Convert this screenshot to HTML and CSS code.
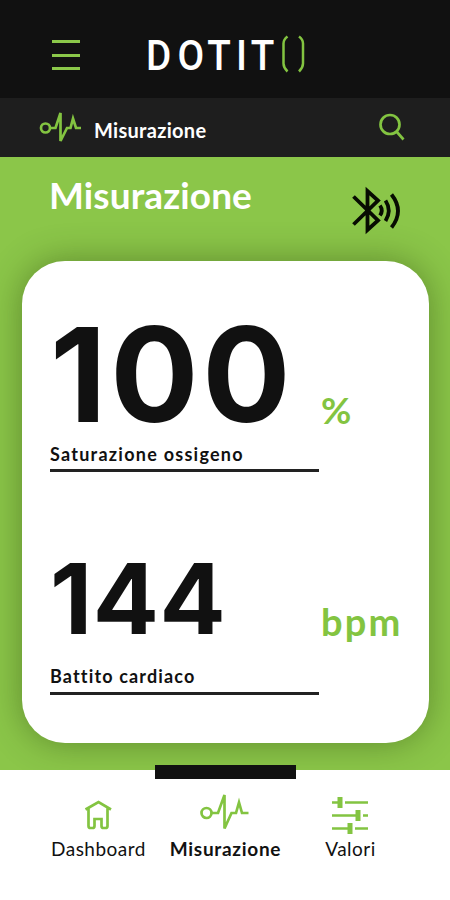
FILE: index.html
```html
<!DOCTYPE html>
<html lang="it">
<head>
    <meta charset="UTF-8">
    <meta name="viewport" content="width=device-width, initial-scale=1.0">
    <title>Misurazione</title>
    <link rel="stylesheet" href="styles.css">
</head>
<body>
    <header class="header">
        <button class="menu-button" aria-label="Menu">
            <span></span>
            <span></span>
            <span></span>
        </button>
        <svg class="logo" width="160" height="44" viewBox="0 0 160 44">
            <text class="logo-text" transform="scale(0.9 1)" x="0 35 68 100 116.500" y="36.500">DOTIT</text>
            <path class="logo-bracket" d="M141.500 3.500q-4 3-4 7v20q0 4 4 8M153 3.500q4 3 4 7v20q0 4-4 8"/>
        </svg>
    </header>

    <div class="section-bar">
        <svg class="pulse" width="42" height="34" viewBox="0 0 42 34">
            <circle cx="5.500" cy="17" r="4.500"/>
            <path d="M10 17h5.500L20.500 2v28l6.500-13h3.500L33 7.500l3 9.500H41"/>
        </svg>
        <span class="section-name">Misurazione</span>
        <svg class="search" width="28" height="30" viewBox="0 0 28 30">
            <circle cx="12" cy="11.500" r="9.500"/>
            <path d="M18.500 18.500l7 8"/>
        </svg>
    </div>

    <main class="content">
        <div class="title-row">
            <h1>Misurazione</h1>
            <svg class="bluetooth" width="50" height="46" viewBox="0 0 50 46">
                <path d="M2.500 9.500l24.500 24L16.500 43V4L27 13.500l-24.500 24"/>
                <path d="M29 18.500q3.500 5 0 10M34.500 13.500q6.500 10 0 20.500M40.500 7.500q13 16.500 0 33"/>
            </svg>
        </div>

        <section class="card">
            <div class="measure oxygen">
                <div class="reading">
                    <div class="value">100</div>
                    <div class="unit">%</div>
                </div>
                <div class="label">Saturazione ossigeno</div>
            </div>
            <div class="measure heart">
                <div class="reading">
                    <div class="value">144</div>
                    <div class="unit">bpm</div>
                </div>
                <div class="label">Battito cardiaco</div>
            </div>
        </section>
    </main>

    <nav class="tab-bar">
        <a class="tab dashboard">
            <svg width="30" height="38" viewBox="0 0 30 38">
                <path d="M1.500 16.500L14.500 9l12.500 7.500M4.500 15v18q0 2 2 2h2q2 0 2-2v-7h7v7q0 2 2 2h2q2 0 2-2V15"/>
            </svg>
            <span>Dashboard</span>
        </a>
        <a class="tab active">
            <svg width="50" height="38" viewBox="0 0 50 38">
                <circle cx="5.500" cy="20" r="5"/>
                <path d="M10.500 20h6.500L23.500 2v33.500l7-15.500h4.500L38 9.500l3 10.500H47.500"/>
            </svg>
            <span>Misurazione</span>
        </a>
        <a class="tab valori">
            <svg width="38" height="38" viewBox="0 0 38 38">
                <path d="M0 9.500h6M13 9.500h23M0 22.500h24M31 22.500h5M0 35.500h16M23 35.500h13"/>
                <path class="knob" d="M8 4v11M26 17v11M18 30v11"/>
            </svg>
            <span>Valori</span>
        </a>
    </nav>
</body>
</html>
```
FILE: styles.css
```css
body {
    margin: 0;
    width: 450px;
    height: 900px;
    overflow: hidden;
    font-family: Lato, "Open Sans", sans-serif;
    color: #111;
    background-color: white;
}

svg {
    display: block;
    flex-shrink: 0;
    overflow: visible;
    fill: none;
    stroke: #83c441;
    stroke-width: 2.7;
}

/* Top header */
.header {
    height: 98px;
    box-sizing: border-box;
    padding: 33px 0 0 52px;
    display: flex;
    background-color: #111;
}

.menu-button {
    width: 28px;
    height: 30px;
    margin: 7px 66px 0 0;
    padding: 0;
    border: none;
    background: none;
    display: flex;
    flex-direction: column;
    justify-content: space-between;
}

.menu-button span {
    height: 3px;
    background-color: #8bc84a;
}

.logo-text {
    font-family: Roboto, sans-serif;
    font-size: 43px;
    font-weight: 500;
    fill: white;
    stroke: none;
}

.logo-bracket {
    stroke-width: 2.5;
}

/* Section bar */
.section-bar {
    height: 59px;
    box-sizing: border-box;
    padding: 0 44px 0 40px;
    display: flex;
    align-items: center;
    background-color: #1e1e1e;
}

.pulse {
    margin-right: 12px;
}

.section-name {
    flex: 1;
    padding-top: 5px;
    font-size: 20px;
    font-weight: bold;
    letter-spacing: 0.3px;
    color: white;
}

/* Green area */
.content {
    height: 613px;
    background-color: #8bc649;
    overflow: hidden;
}

.title-row {
    height: 104px;
    box-sizing: border-box;
    padding: 13px 49px 0 49px;
    display: flex;
    justify-content: space-between;
}

h1 {
    margin: 0;
    font-size: 37px;
    line-height: 50px;
    letter-spacing: 0.1px;
    color: white;
}

.bluetooth {
    margin-top: 17px;
    stroke: #080c02;
    stroke-width: 3.8;
}

.card {
    height: 482px;
    margin: 0 21px 0 22px;
    box-sizing: border-box;
    padding: 51px 0 0 28px;
    background-color: white;
    border-radius: 43px;
    box-shadow: 0 0 35px rgba(40, 65, 10, 0.45);
}

.reading {
    display: flex;
    align-items: flex-end;
}

.value {
    width: 271px;
    font-family: Inter, sans-serif;
    font-weight: 700;
    white-space: nowrap;
}

.oxygen .value {
    font-size: 131px;
    line-height: 125px;
    letter-spacing: 3.7px;
}

.heart .value {
    font-size: 98px;
    line-height: 100px;
    letter-spacing: 0.5px;
}

.unit {
    margin-bottom: 8px;
    font-size: 38px;
    line-height: 40px;
    font-weight: bold;
    letter-spacing: 2.2px;
    color: #83c441;
}

.oxygen .unit {
    margin-bottom: 7px;
    font-size: 37px;
}

.label {
    width: 269px;
    height: 35px;
    box-sizing: border-box;
    padding-top: 5px;
    border-bottom: 3px solid #222;
    font-size: 18px;
    line-height: 24px;
    font-weight: bold;
    letter-spacing: 1.25px;
}

.heart {
    margin-top: 77px;
}

.heart .label {
    height: 36px;
    margin-top: 10px;
    letter-spacing: 1.15px;
}

/* Bottom navigation */
.tab-bar {
    height: 130px;
    display: flex;
    padding-left: 42px;
    position: relative;
}

.tab {
    padding-top: 23px;
    box-sizing: border-box;
    display: flex;
    flex-direction: column;
    align-items: center;
    font-size: 19px;
    line-height: 35px;
    letter-spacing: 0.5px;
}

.dashboard {
    width: 113px;
}

.active {
    width: 141px;
    font-weight: bold;
    letter-spacing: 0.7px;
}

.valori {
    width: 109px;
}

/* Marker over the current tab */
.active::before {
    content: "";
    position: absolute;
    top: -5px;
    width: 141px;
    height: 14px;
    background-color: #111;
}

.knob {
    stroke-width: 5;
}
```
